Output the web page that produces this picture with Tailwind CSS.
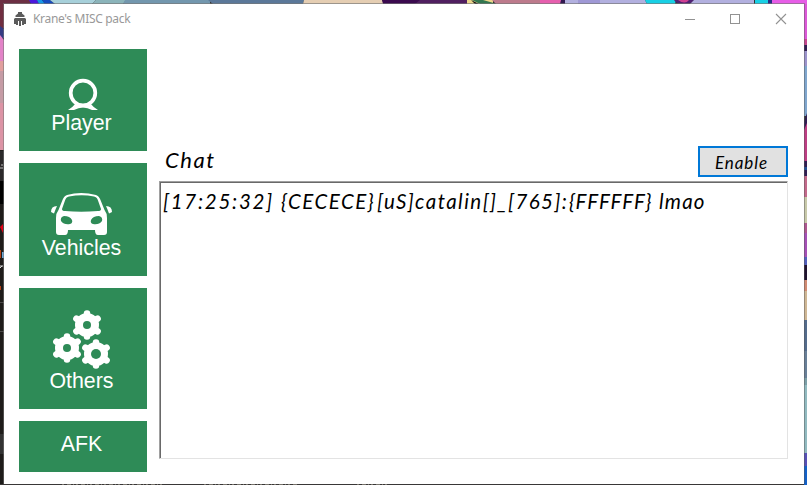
<!DOCTYPE html>
<html lang="en">
<head>
<meta charset="utf-8">
<title>Krane's MISC pack</title>
<script src="https://cdn.jsdelivr.net/npm/@tailwindcss/browser@4"></script>
</head>
<body class="w-[807px] h-[485px] overflow-hidden bg-[#333]">
<div class="w-[807px] h-[485px] grid grid-cols-[4px_800px_3px] grid-rows-[4px_480px_1px]">
  <!-- desktop above the window -->
  <svg class="col-span-3" width="807" height="4" viewBox="0 0 807 4">
    <path fill="#6c2f43" d="M0 0h30v4H0z"/><path fill="#4b18dc" d="M29 0h8l2 4h-8z"/><path fill="#1597e8" d="M37 0h5l3 4h-6z"/><path fill="#164bc0" d="M42 0h8l5 4H45z"/>
    <path fill="#a7d0da" d="M50 0h46l-4 4H55z"/><path fill="#8bb4ba" d="M96 0h30l-3 4H92z"/><path fill="#7397ae" d="M125 0h85v4h-87z"/><path fill="#5b7899" d="M208 0h96l-1 4h-90z"/>
    <path fill="#e5ceb3" d="M304 0h78l2 4h-81z"/><path fill="#3b0a4f" d="M382 0h39l-6 4h-32z"/><path fill="#501f60" d="M420 0h47v4h-52z"/><path fill="#ecd68b" d="M467 0h26v4h-26z"/><path fill="#32764f" d="M472 0h11l14 4h-17z"/><path fill="#111" d="M471 0l8 4h-4z"/>
    <path fill="#bd7b8c" d="M492 0h48v4h-44z"/><path fill="#e65fae" d="M540 0h22v4h-22z"/><path fill="#321950" d="M561 0h5l-1 4h-5z"/><path fill="#b2b0df" d="M565 0h80l2 4h-82z"/><path fill="#9f98d5" d="M578 0h22v4h-22z"/><path fill="#18d0e5" d="M645 0h31l-1 4h-28z"/><path fill="#502174" d="M674 0h20q-2 4-10 4t-10-4z"/><path fill="#cf4092" d="M678 0h11q-4 5-11 0z"/><path fill="#b2b0df" d="M694 0h60v4h-64z"/><path fill="#18d0e5" d="M755 0h13v4h-13z"/><path fill="#263087" d="M768 0h4v4h-4z"/><path fill="#e75de7" d="M772 0h35v4h-35z"/><path fill="#777" fill-opacity=".65" d="M3 3h802v1H3z"/>
  </svg>
  <!-- desktop left of the window -->
  <svg width="4" height="480" viewBox="0 4 4 480">
    <path fill="#1e1c1a" d="M0 4h4v480H0z"/><path fill="#702e40" d="M0 4h4v24H0z"/><path fill="#353b83" d="M0 26l4 3v9H0z"/><path fill="#e282c7" d="M0 35l4 5v22H0z"/><path fill="#e19e9e" d="M0 61h4v10H0z"/><path fill="#c59ba5" d="M0 71h4v33H0z"/><path fill="#dc93a5" d="M0 103h4v47H0z"/><path fill="#2b292a" d="M0 151h4v30H0z"/><path stroke="#bbb" d="M1 165h2M0 168h3"/><path fill="#000" d="M0 181h4v23H0z"/><path fill="#e00016" d="M0 227l3-3v9z"/><path fill="#6aa6d5" d="M2 252h2v6H2z"/><path fill="#b64217" d="M0 250h1v8H0zM0 286h1v4H0z"/><path stroke="#ddd" d="M0 266h3M0 268l2-2"/><path stroke="#4b4948" d="M0 302.500h4M0 331.500h4"/><path fill="#333" d="M0 434h4v20H0z"/><path fill="#777" fill-opacity=".55" d="M3 4h1v480H3z"/>
  </svg>
  <main class="bg-white w-[800px] h-[480px] flex flex-col">
    <header class="h-[29px] flex items-center">
      <svg class="ml-[9px] shrink-0" width="14" height="16" viewBox="0 0 14 16"><path fill="#5b5b5b" d="M5 1h4v1.500l2.500 2V6h-9V4.500L5 2.500z"/><path fill="#5b5b5b" d="M2 7h10l1 1v5h-2v1H9v-4H8v5H6v-5H5v4H3v-1H1V8z"/></svg>
      <h1 class="ml-[6px] font-['Noto_Sans'] text-[12px] leading-[16px] text-[#999] w-[100px] whitespace-nowrap tracking-[-0.32px]">Krane's MISC pack</h1>
      <svg class="ml-auto mr-[16px]" width="104" height="12" viewBox="0 0 104 12" fill="none" stroke="#929292" shape-rendering="crispEdges"><path d="M1 6.500h10M46.500 1.500h9v9h-9z"/><path d="M92 1l10 10M102 1l-10 10" shape-rendering="auto" stroke-width="1.1"/></svg>
    </header>
    <div class="flex pl-[15px] pt-[16px] gap-[12px]">
      <nav class="w-[128px] flex flex-col gap-[12px] font-['Liberation_Sans',sans-serif] text-[21.33px] leading-[24px] text-white text-center">
        <button class="h-[102px] bg-[#2e8b57] flex flex-col items-center pt-[29px]">
          <svg width="32" height="33" viewBox="0 0 32 33"><circle cx="16" cy="15" r="12.300" fill="none" stroke="#fff" stroke-width="3.700"/><path fill="#fff" d="M1 32q5-3 8-7 7 2 14 0 3 4 8 7h-6q-9-5-18 0z"/></svg>
          <span class="-ml-[3px]">Player</span>
        </button>
        <button class="h-[113px] bg-[#2e8b57] flex flex-col items-center pt-[28px]">
          <svg class="-ml-[2px]" width="62" height="45" viewBox="0 0 62 45"><path fill="#fff" fill-rule="evenodd" d="M16 4q14-4 29 0 3 1 4.500 5l4 10q2.500 3 2.500 8v14q0 3-3 3h-6q-3 0-3-5H17q0 5-3 5H8q-3 0-3-3V27q0-5 2.500-8l4-10Q13 5 16 4zM18 5.500q-3 .5-4 4L11 18q0 2 3 2 16 1.500 33 0 3 0 3-2l-3-8.500q-1-3.500-4-4-12-2.500-25 0zM13 25q-4 1-3 5 3 4 9 3 3-1 2-4-2-4-8-4zM48 25q4 1 3 5-3 4-9 3-3-1-2-4 2-4 8-4z"/><path fill="#fff" d="M6 15q-6 0-6 6l3 1.500 1.500-4zM55 15q6 0 6 6l-3 1.500-1.500-4z"/></svg>
          <span class="-ml-[3px]">Vehicles</span>
        </button>
        <button class="h-[121px] bg-[#2e8b57] flex flex-col items-center pt-[21px]">
          <svg width="60" height="60" viewBox="0 0 60 60" fill="#fff">
            <defs><g id="gear"><circle r="12"/><path fill="none" stroke="#fff" stroke-width="6.500" stroke-linecap="round" d="M0-11.500v23M-10.600-6.400l21.200 12.800M-10.600 6.400l21.200-12.800"/></g></defs>
            <use href="#gear" x="34" y="16"/><circle cx="34" cy="16" r="4" fill="#2e8b57"/>
            <use href="#gear" x="14" y="39"/><circle cx="14" cy="39" r="4" fill="#2e8b57"/>
            <use href="#gear" x="43" y="45"/><circle cx="43" cy="45" r="5" fill="#2e8b57"/>
          </svg>
          <span class="-ml-[3px]">Others</span>
        </button>
        <button class="h-[51px] bg-[#2e8b57] pb-[6px]"><span class="-ml-[3px]">AFK</span></button>
      </nav>
      <section class="w-[629px] flex flex-col pt-[97px] font-[Lato,'Open_Sans',sans-serif] italic text-black">
        <div class="flex justify-between h-[35px]">
          <h2 class="pl-[6px] text-[22px] leading-[28px] tracking-[1.5px]">Chat</h2>
          <button class="w-[90px] h-[31px] border-2 border-[#0078d7] bg-[#e1e1e1] text-[17px] leading-[27px] tracking-[0.9px] italic pr-[3px] pt-px">Enable</button>
        </div>
        <div class="h-[278px] border-l border-t border-[#a0a0a0] border-r border-b border-r-[#e3e3e3] border-b-[#e3e3e3]">
          <div class="h-full border-l border-t border-[#696969] pt-[3px] pl-[2px] text-[20.5px] leading-[30px] whitespace-nowrap flex">
            <span class="w-[118px] tracking-[1.75px]">[17:25:32]</span><span class="w-[96px] tracking-[1.5px]">{CECECE}</span><span class="w-[192px] tracking-[1.45px]">[uS]catalin[]_[765]:</span><span class="w-[90px] tracking-[0.8px]">{FFFFFF}</span><span class="tracking-[1.2px]">lmao</span>
          </div>
        </div>
      </section>
    </div>
  </main>
  <!-- desktop right of the window -->
  <svg width="3" height="480" viewBox="0 4 3 480">
    <path fill="#dc58d7" d="M0 4h3v37H0z"/><path fill="#c6478f" d="M0 39h3v6H0z"/><path fill="#301e52" d="M0 45h3v6H0z"/><path fill="#9b93cc" d="M0 51h3v15H0z"/><path fill="#7fa6ce" d="M0 66h3v50H0z"/><path fill="#301e52" d="M0 122l3-9v48H0z"/><path fill="#be3d83" d="M0 130l3-7v40H0z"/><path fill="#301e52" d="M0 161h3v15H0z"/><path fill="#244e94" d="M0 167h3v3H0z"/><path fill="#c3698a" d="M0 176h3v21H0z"/><path fill="#c8c9a9" d="M0 197h3v26H0z"/><path fill="#ae578f" d="M0 223h3v10H0z"/><path fill="#a550b6" d="M0 233h3v24H0z"/><path fill="#525fbd" d="M0 257h3v8H0z"/><path fill="#20122f" d="M0 265h3v15H0z"/><path fill="#d18a72" d="M0 280h3v11H0z"/><path fill="#cfb794" d="M0 291h3v29H0z"/><path fill="#536b8c" d="M0 320h3v31H0z"/><path fill="#687f98" d="M0 351h3v27H0z"/><path fill="#7b9fa7" d="M0 378h3v7H0z"/><path fill="#91bac0" d="M0 385h3v68H0z"/><path fill="#5650b7" d="M0 453h3v13H0z"/><path fill="#1261c9" d="M0 466h3v18H0z"/><path fill="#555" fill-opacity=".45" d="M0 4h1v480H0z"/>
  </svg>
  <svg class="col-span-3" width="807" height="1" viewBox="0 0 807 1"><path fill="#393737" d="M0 0h804v1H0z"/><path stroke="#77736b" stroke-dasharray="2 3 4 2 1 2" d="M62 .5h100M204 .5h94M357 .5h32"/><path fill="#1261c9" d="M804 0h3v1h-3z"/></svg>
</div>
</body>
</html>
